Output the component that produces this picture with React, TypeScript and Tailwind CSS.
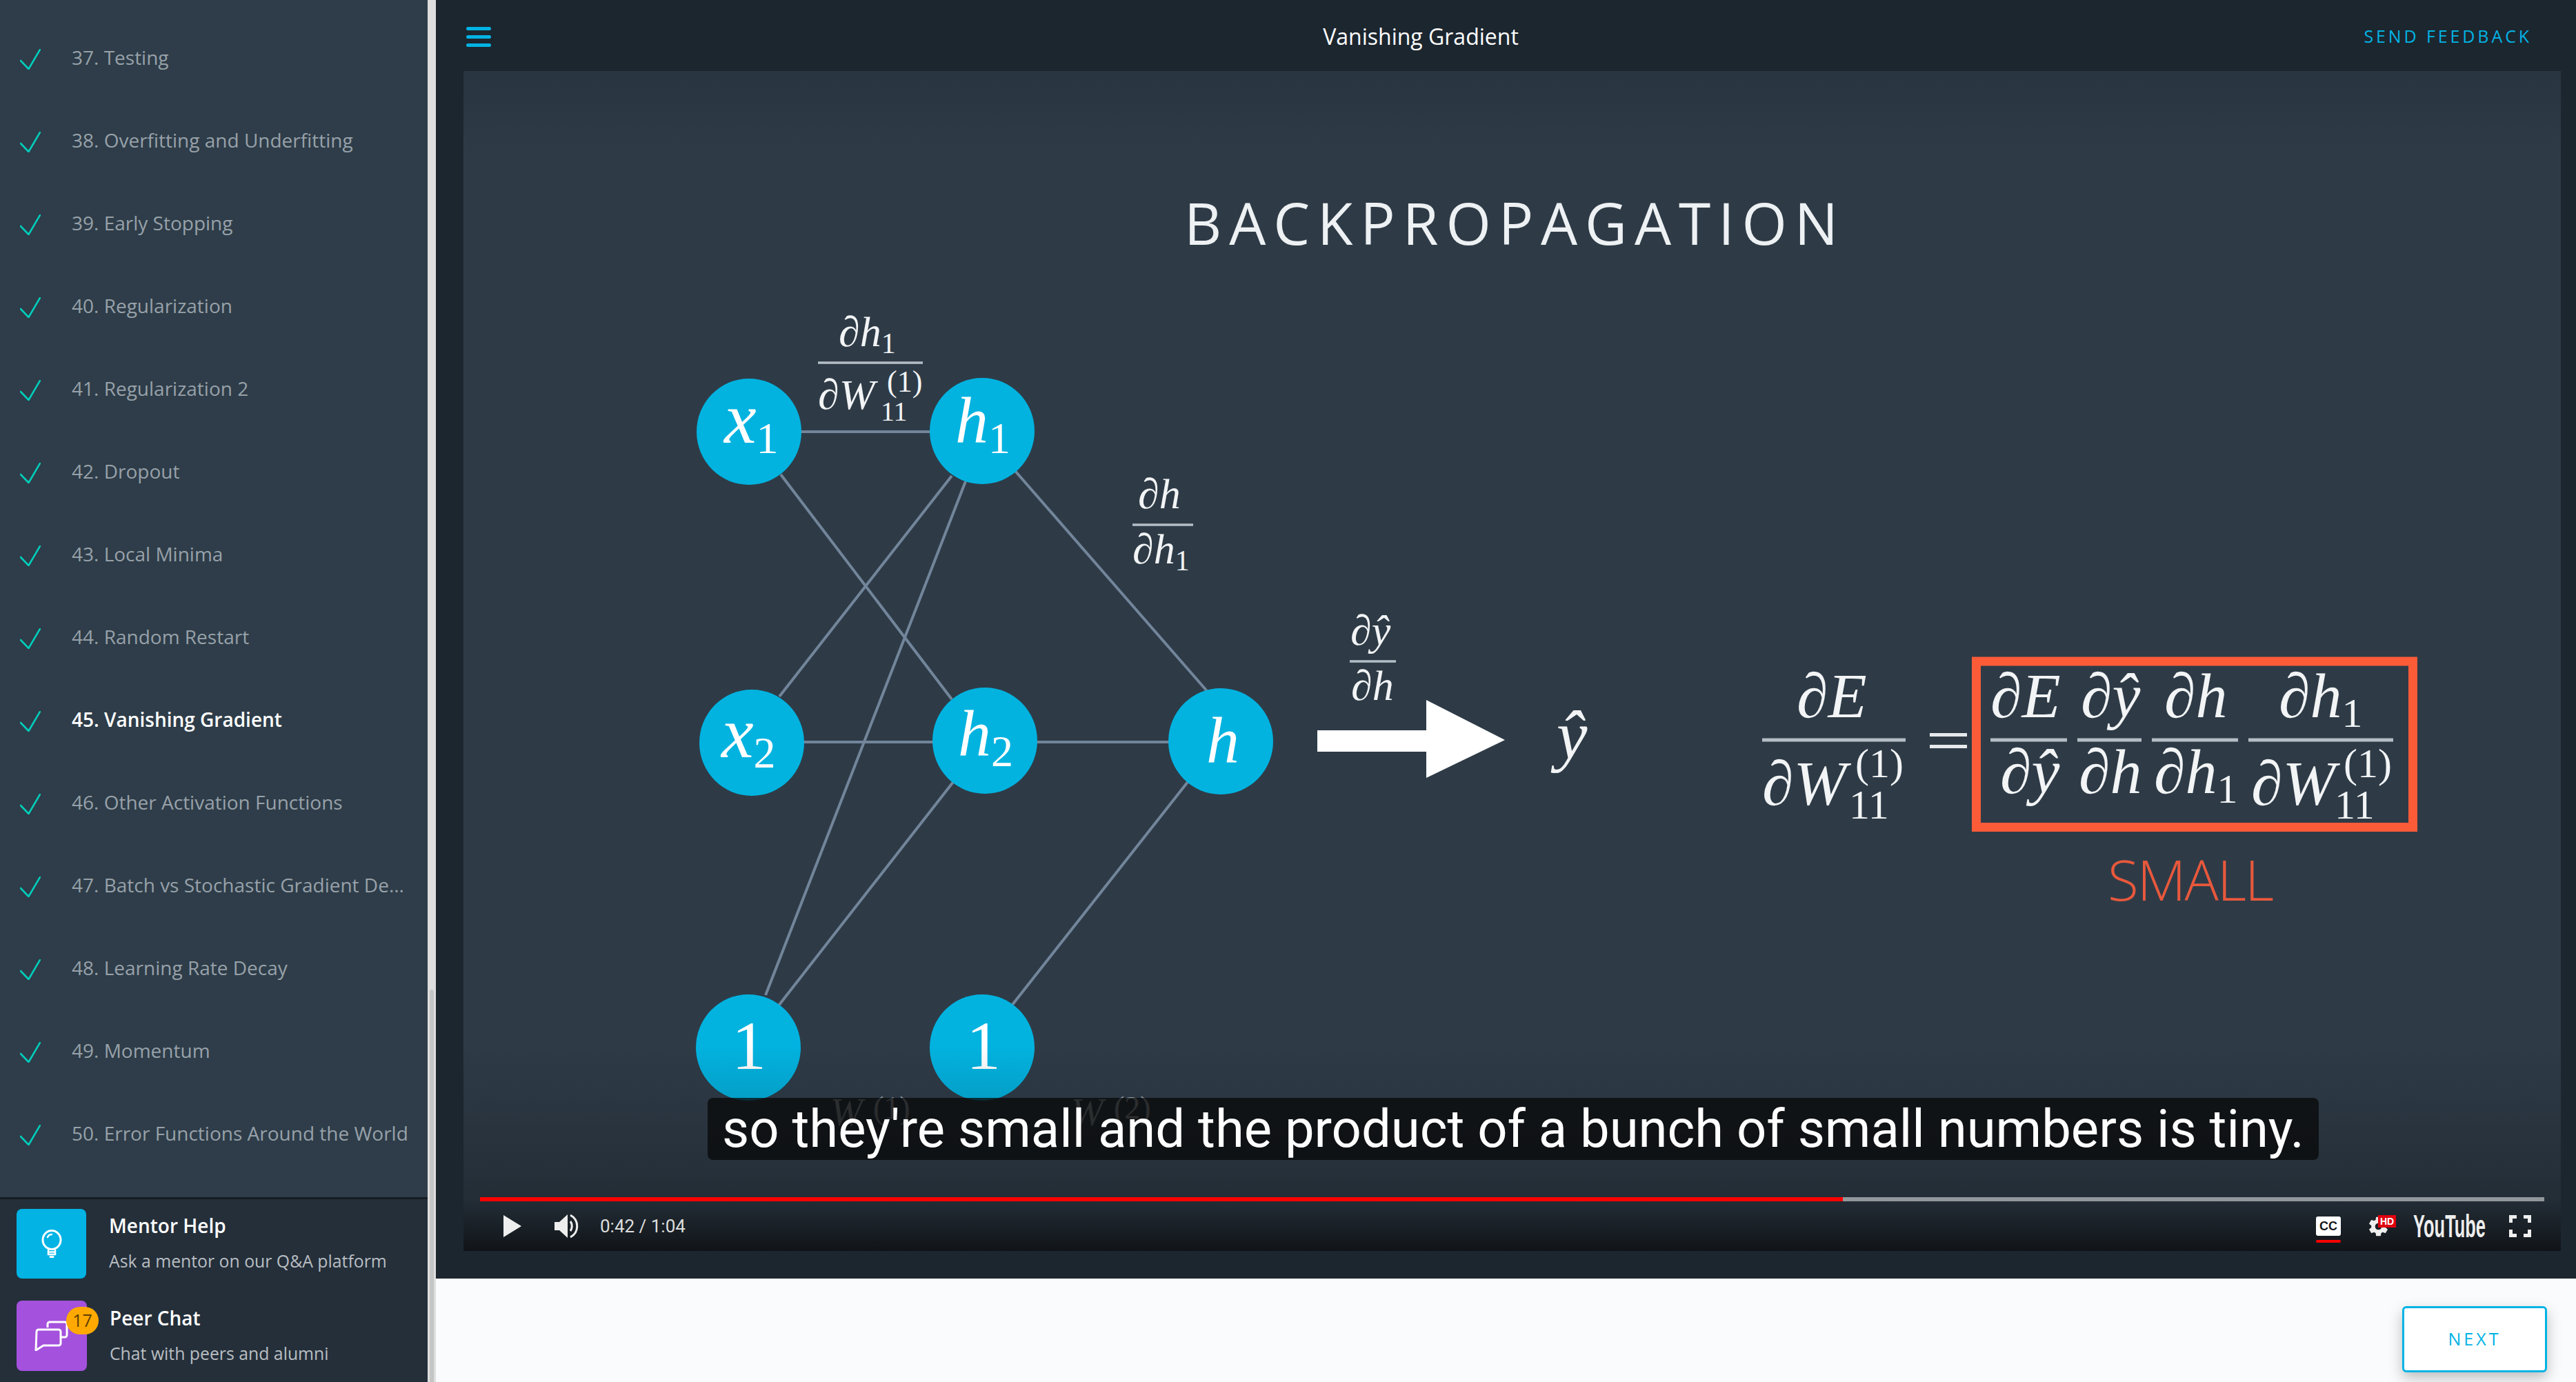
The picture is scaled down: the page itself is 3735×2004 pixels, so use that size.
const lessons = [
  "37. Testing",
  "38. Overfitting and Underfitting",
  "39. Early Stopping",
  "40. Regularization",
  "41. Regularization 2",
  "42. Dropout",
  "43. Local Minima",
  "44. Random Restart",
  "45. Vanishing Gradient",
  "46. Other Activation Functions",
  "47. Batch vs Stochastic Gradient De...",
  "48. Learning Rate Decay",
  "49. Momentum",
  "50. Error Functions Around the World",
];

function Sidebar() {
  return (
    <aside className="flex h-full w-[632px] shrink-0">
      <div className="flex w-[620px] flex-col bg-[#2e3d49]">
        <ul className="flex-1 overflow-hidden pt-[24px]">
          {lessons.map((name) => (
            <li key={name} className="flex h-[120px] items-center pl-[29px]">
              <svg width="30" height="30" viewBox="0 0 30 30" fill="none" className="shrink-0 translate-y-[2px]">
                <path d="M1 17 L12.5 29 L29 1" stroke="#02ccba" strokeWidth="2.6" strokeLinecap="round" strokeLinejoin="round" />
              </svg>
              <span
                className={
                  name.startsWith("45.")
                    ? "ml-[45px] -translate-y-[1px] whitespace-nowrap text-[28px] font-semibold text-white"
                    : "ml-[45px] -translate-y-[1px] whitespace-nowrap text-[28px] text-[#98a1a9]"
                }
              >
                {name}
              </span>
            </li>
          ))}
        </ul>
        <div className="h-[268px] border-t-[3px] border-[#161d23] bg-[#242f3a] pl-[24px] pt-[14px]">
          <div className="flex h-[101px] items-center">
            <div className="flex size-[101px] items-center justify-center rounded-[8px] bg-[#02b3e4]">
              <svg width="30" height="42" viewBox="0 0 30 42" fill="none" stroke="white" strokeLinecap="round">
                <ellipse cx="15" cy="15" rx="13" ry="13.5" strokeWidth="3" />
                <path d="M15 7 C12 7 10 8.5 9 11" strokeWidth="2.5" />
                <path d="M10 29 V36 H20 V29 M10 32.5 H20" strokeWidth="2.5" strokeLinecap="butt" />
                <path d="M13 39.5 H17" strokeWidth="3" />
              </svg>
            </div>
            <div className="ml-[33px] flex -translate-y-[2px] flex-col gap-[19px]">
              <span className="text-[28px] leading-[34px] font-semibold text-white">Mentor Help</span>
              <span className="text-[24.8px] leading-[30px] text-[#b9bec2]">Ask a mentor on our Q&amp;A platform</span>
            </div>
          </div>
          <div className="relative mt-[32px] flex h-[102px] items-center">
            <div className="flex size-[102px] items-center justify-center rounded-[8px] bg-[#a451dd]">
              <svg width="50" height="44" viewBox="0 0 50 44" fill="none" stroke="white" strokeWidth="3" strokeLinejoin="round">
                <path d="M19 10 V5 a3 3 0 0 1 3 -3 H44 a3 3 0 0 1 3 3 V21 a3 3 0 0 1 -3 3 H39" />
                <path d="M6 13 H35 a3 3 0 0 1 3 3 V33 a3 3 0 0 1 -3 3 H13 L2 43 L3 16 a3 3 0 0 1 3 -3 Z" />
              </svg>
            </div>
            <span className="absolute top-[9px] left-[72px] flex h-[40px] w-[47px] items-center justify-center rounded-full bg-[#ffa900] text-[25px] text-[#5c3d00]">
              17
            </span>
            <div className="ml-[33px] flex -translate-y-[2px] flex-col gap-[19px]">
              <span className="text-[28px] leading-[34px] font-semibold text-white">Peer Chat</span>
              <span className="text-[24.8px] leading-[30px] text-[#b9bec2]">Chat with peers and alumni</span>
            </div>
          </div>
        </div>
      </div>
      <div className="flex w-[12px] flex-col bg-[#dedede] pt-[1435px]">
        <div className="mx-auto h-full w-[6px] rounded-t-full bg-[#c4c6c6]" />
      </div>
    </aside>
  );
}

function Frac({ x, w, y, thick = 5 }: { x: number; w: number; y: number; thick?: number }) {
  return <rect x={x} y={y - thick / 2} width={w} height={thick} fill="#b5bec6" />;
}

function Slide() {
  const math = { fontFamily: "'Liberation Serif', serif", fontStyle: "italic" } as const;
  const roman = { fontFamily: "'Liberation Serif', serif", fontStyle: "normal" } as const;
  const nodes: [number, number, number, number, number, string, string][] = [
    [1086, 626, 1050, 642, 105, "x", "1"],
    [1424, 625, 1385, 642, 96, "h", "1"],
    [1090, 1077, 1046, 1098, 105, "x", "2"],
    [1428, 1074, 1389, 1096, 96, "h", "2"],
    [1770, 1075, 1749, 1106, 96, "h", ""],
    [1085, 1519, 1061, 1550, 100, "", "1"],
    [1424, 1519, 1401, 1550, 100, "", "1"],
  ];
  const lines = [
    [1086, 626, 1424, 626],
    [1132, 688, 1380, 1014],
    [1380, 690, 1130, 1010],
    [1400, 698, 1110, 1443],
    [1472, 683, 1750, 1002],
    [1090, 1076, 1770, 1076],
    [1129, 1458, 1382, 1134],
    [1467, 1458, 1722, 1134],
  ];
  return (
    <svg viewBox="672 103 3041 1711" className="absolute inset-0 size-full">
      <text x="1717" y="355" fontSize="84" fill="#eef1f3" textLength="948" fontFamily="'Open Sans', sans-serif" fontWeight="400">
        BACKPROPAGATION
      </text>
      {lines.map((l, i) => (
        <line key={i} x1={l[0]} y1={l[1]} x2={l[2]} y2={l[3]} stroke="#72859a" strokeWidth="4" />
      ))}
      {nodes.map(([cx, cy, tx, ty, size, v, s]) => (
        <g key={`${cx}-${cy}`}>
          <ellipse cx={cx} cy={cy} rx="76" ry="77" fill="#02b3e0" />
          <text x={tx} y={ty} fontSize={size} fill="#fff" style={math}>
            {v}
            {s && (
              <tspan dy={v ? 15 : 0} fontSize={v ? 64 : 100} style={roman}>
                {s}
              </tspan>
            )}
          </text>
        </g>
      ))}

      {/* edge labels */}
      <g fill="#f2f4f5" style={math}>
        <text x="1216" y="502" fontSize="62">
          ∂h<tspan dy="10" fontSize="42" style={roman}>1</tspan>
        </text>
        <text x="1186" y="593" fontSize="62">∂W</text>
        <text x="1286" y="568" fontSize="44" style={roman}>(1)</text>
        <text x="1277" y="610" fontSize="40" style={roman}>11</text>

        <text x="1650" y="737" fontSize="62">∂h</text>
        <text x="1642" y="817" fontSize="62">
          ∂h<tspan dy="10" fontSize="42" style={roman}>1</tspan>
        </text>

        <text x="1958" y="935" fontSize="62">∂ŷ</text>
        <text x="1959" y="1015" fontSize="62">∂h</text>
        <text x="2257" y="1100" fontSize="100">ŷ</text>
      </g>
      <Frac x={1186} w={152} y={526} thick={3.5} />
      <Frac x={1642} w={88} y={761} thick={3.5} />
      <Frac x={1957} w={67} y={959} thick={3.5} />

      <path d="M1910 1059 H2068 V1015 L2182 1073 L2068 1128 V1090 H1910 Z" fill="#fff" />

      {/* equation */}
      <g fill="#f2f4f5" style={math}>
        <text x="2605" y="1040" fontSize="92">∂E</text>
        <text x="2555" y="1167" fontSize="92">∂W</text>
        <text x="2690" y="1127" fontSize="60" style={roman}>(1)</text>
        <text x="2681" y="1187" fontSize="60" style={roman}>11</text>

        <text x="2886" y="1040" fontSize="92">∂E</text>
        <text x="2900" y="1150" fontSize="92">∂ŷ</text>
        <text x="3017" y="1040" fontSize="92">∂ŷ</text>
        <text x="3014" y="1150" fontSize="92">∂h</text>
        <text x="3138" y="1040" fontSize="92">∂h</text>
        <text x="3123" y="1150" fontSize="92">
          ∂h<tspan dy="14" fontSize="60" style={roman}>1</tspan>
        </text>
        <text x="3304" y="1040" fontSize="92">
          ∂h<tspan dy="14" fontSize="60" style={roman}>1</tspan>
        </text>
        <text x="3264" y="1167" fontSize="92">∂W</text>
        <text x="3398" y="1127" fontSize="60" style={roman}>(1)</text>
        <text x="3385" y="1187" fontSize="60" style={roman}>11</text>
      </g>
      <Frac x={2555} w={208} y={1073} />
      <Frac x={2886} w={111} y={1073} />
      <Frac x={3012} w={93} y={1073} />
      <Frac x={3120} w={125} y={1073} />
      <Frac x={3260} w={210} y={1073} />
      <rect x="2798" y="1063" width="54" height="5" fill="#e6e9eb" />
      <rect x="2798" y="1080" width="54" height="5" fill="#e6e9eb" />
      <rect x="2865.5" y="959" width="633" height="240.5" fill="none" stroke="#fc5b38" strokeWidth="13" />
      <text x="3056" y="1306" fontSize="82" fill="#e8583c" textLength="241" fontFamily="'Open Sans', sans-serif" fontWeight="300">
        SMALL
      </text>

      {/* labels that sit behind the caption */}
      <g fill="#a8b2ba" style={math}>
        <text x="1204" y="1632" fontSize="56">W</text>
        <text x="1266" y="1622" fontSize="46" style={roman}>(1)</text>
        <text x="1553" y="1632" fontSize="56">W</text>
        <text x="1615" y="1622" fontSize="46" style={roman}>(2)</text>
      </g>
    </svg>
  );
}

function Controls() {
  return (
    <div className="absolute inset-x-0 bottom-0 flex h-[300px] flex-col justify-end bg-gradient-to-b from-transparent via-[#101418]/35 via-75% to-[#101418] px-[24px] pb-[20px]">
      <div className="flex h-[6px] bg-[#92979b]">
        <div className="w-[1976px] bg-[#ff0000]" />
      </div>
      <div className="mt-[20px] flex h-[32px] items-center">
        <svg width="26" height="32" viewBox="0 0 26 32" className="ml-[34px]">
          <path d="M0 0 L26 16 L0 32 Z" fill="#eeeeee" />
        </svg>
        <svg width="36" height="36" viewBox="0 0 36 36" fill="none" className="ml-[48px]">
          <path d="M0 12 H7 L19 1 V35 L7 24 H0 Z" fill="#eeeeee" />
          <path d="M23 11 C26 15 26 21 23 25" stroke="#eeeeee" strokeWidth="3" />
          <path d="M23 2 C36 9 36 27 23 34" stroke="#eeeeee" strokeWidth="3" />
        </svg>
        <span className="ml-[30px] font-['Roboto',sans-serif] text-[26px] text-[#dddddd]">0:42 / 1:04</span>
        <div className="ml-auto mr-[19px] flex items-center">
          <div className="relative h-[28px] w-[36px] rounded-[3px] bg-white text-center font-['Liberation_Sans',sans-serif] text-[18px] leading-[28px] font-bold text-[#11161a]">
            CC
            <div className="absolute inset-x-0 top-[34px] h-[4px] rounded-full bg-[#ff0000]" />
          </div>
          <div className="relative ml-[38px] h-[32px] w-[42px]">
            <svg width="33" height="33" viewBox="0 0 24 24" className="absolute top-0 left-0">
              <path
                fill="#eeeeee"
                d="M19.4 13c.04-.32.1-.66.1-1s-.06-.68-.1-1l2.1-1.65c.2-.15.25-.42.13-.64l-2-3.46c-.12-.22-.4-.3-.6-.22l-2.5 1c-.52-.4-1.08-.73-1.7-.98l-.37-2.65A.5.5 0 0 0 14 2h-4c-.25 0-.46.18-.5.42l-.37 2.65c-.6.25-1.17.6-1.7.98l-2.48-1a.5.5 0 0 0-.6.22l-2 3.46c-.13.22-.07.5.12.64L4.57 11c-.04.32-.07.65-.07 1s.03.68.07 1l-2.1 1.65c-.2.15-.25.42-.13.64l2 3.46c.12.22.4.3.6.22l2.5-1c.52.4 1.08.73 1.7.98l.37 2.65c.04.24.25.42.5.42h4c.25 0 .46-.18.5-.42l.37-2.65c.6-.25 1.17-.6 1.7-.98l2.48 1c.24.08.5 0 .62-.22l2-3.46c.13-.22.07-.5-.12-.64L19.43 13zM12 15.5a3.5 3.5 0 1 1 0-7 3.5 3.5 0 0 1 0 7z"
              />
            </svg>
            <span className="absolute top-0 left-[16px] flex h-[18px] w-[26px] items-center justify-center bg-[#e1000f] font-['Liberation_Sans',sans-serif] text-[14px] font-bold text-white">
              HD
            </span>
          </div>
          <svg width="105" height="52" viewBox="0 0 105 52" className="ml-[25px] overflow-visible">
            <text x="0" y="42" fontSize="46" fill="#eeeeee" textLength="105" lengthAdjust="spacingAndGlyphs" fontFamily="'Liberation Sans', sans-serif" fontWeight="700">
              YouTube
            </text>
          </svg>
          <svg width="32" height="32" viewBox="0 0 32 32" fill="none" stroke="#eeeeee" strokeWidth="5" className="ml-[34px]">
            <path d="M2.5 11 V2.5 H11 M21 2.5 H29.5 V11 M29.5 21 V29.5 H21 M11 29.5 H2.5 V21" />
          </svg>
        </div>
      </div>
    </div>
  );
}

export default function App() {
  return (
    <div className="flex h-[2004px] w-[3735px] overflow-hidden font-['Open_Sans',sans-serif]">
      <Sidebar />
      <main className="flex min-w-0 flex-1 flex-col bg-[#fafbfc]">
        <header className="relative z-10 flex h-[103px] items-center justify-between bg-[#1c262f] pl-[44px] pr-[64px] pt-[3px]">
          <div className="flex w-[36px] flex-col gap-[7px]">
            <span className="h-[5px] rounded-full bg-[#02b3e4]" />
            <span className="h-[5px] rounded-full bg-[#02b3e4]" />
            <span className="h-[5px] rounded-full bg-[#02b3e4]" />
          </div>
          <h1 className="absolute left-[1428px] -translate-x-1/2 text-[32px] text-white">Vanishing Gradient</h1>
          <span className="text-[25px] tracking-[3.9px] text-[#02b3e4]">SEND FEEDBACK</span>
        </header>
        <div className="h-[1751px] bg-[#1c262f] pb-[40px] pl-[40px] pr-[22px]">
          <div className="relative h-full bg-[#2e3b47]">
            <Slide />
            <div className="absolute inset-x-0 top-0 h-[120px] bg-gradient-to-b from-[#1c262f]/30 to-transparent" />
            <Controls />
            <div className="absolute top-[1489px] left-[354px] flex h-[90px] items-center rounded-[8px] bg-[#080808]/75 px-[21px] font-['Roboto',sans-serif] text-[76px] whitespace-nowrap text-white">
              so they're small and the product of a bunch of small numbers is tiny.
            </div>
          </div>
        </div>
        <footer className="flex flex-1 justify-end pr-[42px] pt-[40px]">
          <button className="h-[96px] w-[210px] rounded-[6px] border-[3px] border-[#02b3e4] bg-white text-[25px] tracking-[4px] text-[#02b3e4] shadow-[0_8px_20px_rgba(0,0,0,0.25)]">
            NEXT
          </button>
        </footer>
      </main>
    </div>
  );
}
